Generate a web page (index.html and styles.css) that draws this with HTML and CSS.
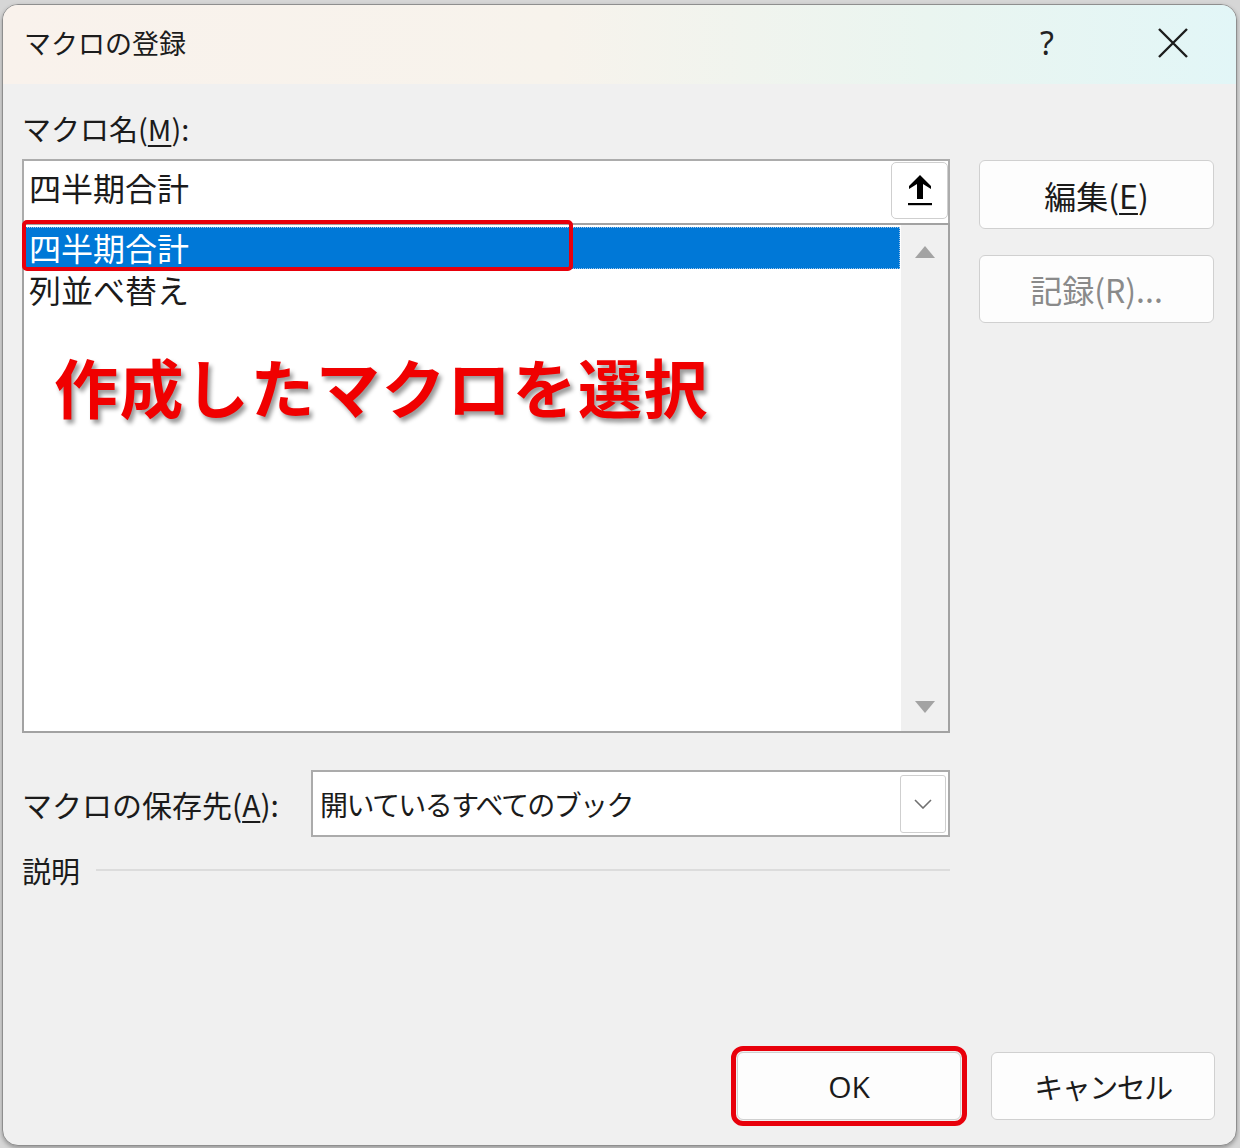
FILE: index.html
```html
<!DOCTYPE html>
<html lang="ja">
<head>
<meta charset="utf-8">
<title>マクロの登録</title>
<link rel="stylesheet" href="styles.css">
</head>
<body>
<div class="dialog">
  <div class="titlebar">
    <span class="title">マクロの登録</span>
    <span class="help">?</span>
    <span class="close">
      <svg width="30" height="30" viewBox="0 0 30 30"><path d="M1 1 L29 29 M29 1 L1 29" stroke="#1c1c1c" stroke-width="2.4" fill="none"/></svg>
    </span>
  </div>
  <div class="content">
    <div class="main">
      <div class="left">
        <div class="lbl">マクロ名(<u>M</u>):</div>
        <div class="namebox">
          <span class="nametext">四半期合計</span>
          <span class="upbtn">
            <svg width="24" height="32" viewBox="0 0 24 32"><path d="M12 0 L23 11 L23 14 L15 9 L15 24 L9 24 L9 9 L1 14 L1 11 Z" fill="#000"/><rect x="0" y="28" width="24" height="2.2" fill="#000"/></svg>
          </span>
        </div>
        <div class="list">
          <div class="rows">
            <div class="row sel">四半期合計</div>
            <div class="row">列並べ替え</div>
          </div>
          <div class="scroll">
            <span class="tri up"></span>
            <span class="tri down"></span>
          </div>
          <div class="mark-row"></div>
          <div class="annot">作成したマクロを選択</div>
        </div>
      </div>
      <div class="right">
        <div class="btn edit">編集(<u>E</u>)</div>
        <div class="btn dis">記録(R)...</div>
      </div>
    </div>
    <div class="saverow">
      <span class="lbl save">マクロの保存先(<u>A</u>):</span>
      <div class="select">
        <span class="seltext">開いているすべてのブック</span>
        <span class="chev">
          <svg width="18" height="10" viewBox="0 0 18 10"><path d="M1 1 L9 9 L17 1" stroke="#707070" stroke-width="1.6" fill="none"/></svg>
        </span>
      </div>
    </div>
    <div class="descrow">
      <span class="lbl">説明</span>
      <span class="rule"></span>
    </div>
    <div class="footer">
      <div class="btn fbtn ok">OK</div>
      <div class="btn fbtn cancel">キャンセル</div>
    </div>
  </div>
</div>
</body>
</html>
```

FILE: styles.css
```css
* { box-sizing: border-box; }
html, body { margin: 0; padding: 0; }
body {
  width: 1240px;
  height: 1148px;
  background: #d6d6d6;
  font-family: "Noto Sans CJK JP", "Noto Sans", sans-serif;
  color: #1b1b1b;
  overflow: hidden;
}
.dialog {
  width: 1235px;
  height: 1142px;
  margin: 4px 0 0 2px;
  border: 1px solid #8e8e8e;
  border-radius: 16px;
  background: #f0f0f0;
  overflow: hidden;
  display: flex;
  flex-direction: column;
  box-shadow: 0 2px 4px rgba(0,0,0,0.3);
}
.titlebar {
  height: 79px;
  flex: none;
  display: flex;
  align-items: center;
  padding: 0 33px 4px 21px;
  background: linear-gradient(90deg, #f9f2ec 0%, #f7f3ec 45%, #eaf5f0 75%, #e2f6f7 100%);
}
.title {
  font-size: 27px;
  color: #1c1c1c;
}
.help {
  margin-left: auto;
  width: 60px;
  text-align: center;
  font-family: "Noto Sans", sans-serif;
  font-weight: 400;
  font-size: 32px;
  color: #222;
}
.close {
  margin-left: 66px;
  width: 60px;
  display: flex;
  justify-content: center;
  align-items: center;
}
.content {
  flex: 1;
  display: flex;
  flex-direction: column;
  padding: 24px 21px 25px 19px;
}
.main {
  display: flex;
  gap: 29px;
}
.left {
  width: 928px;
  display: flex;
  flex-direction: column;
}
.lbl {
  font-size: 29px;
  line-height: 40px;
  white-space: nowrap;
}
.lbl.save { font-size: 30px; }
.lbl u { text-underline-offset: 4px; text-decoration-thickness: 2px; }
.left > .lbl { margin-bottom: 11px; }
.namebox {
  height: 64px;
  background: #fff;
  border: 2px solid #acacac;
  border-bottom: none;
  display: flex;
  align-items: flex-start;
  padding-left: 5px;
}
.nametext {
  font-size: 32px;
  line-height: 52px;
  flex: 1;
}
.upbtn {
  width: 57px;
  height: 57px;
  margin-top: 1px;
  background: #fff;
  border: 1px solid #cfcfcf;
  border-radius: 5px;
  display: flex;
  align-items: center;
  justify-content: center;
}
.list {
  position: relative;
  height: 510px;
  background: #fff;
  border: 2px solid #a2a2a2;
  display: flex;
}
.rows {
  flex: 1;
  padding: 2px 1px 0 0;
}
.row {
  height: 42px;
  font-size: 32px;
  line-height: 40px;
  padding-left: 5px;
  white-space: nowrap;
}
.row.sel {
  background: #0078d7;
  color: #fff;
  outline: 1px dotted #9cc4ea;
  outline-offset: -1px;
}
.scroll {
  width: 47px;
  background: #f0f0f0;
  display: flex;
  flex-direction: column;
  justify-content: space-between;
  align-items: center;
  padding: 21px 0 18px;
}
.tri {
  width: 0;
  height: 0;
  border-left: 10px solid transparent;
  border-right: 10px solid transparent;
}
.tri.up { border-bottom: 12px solid #a3a3a3; }
.tri.down { border-top: 12px solid #a3a3a3; }
.mark-row {
  position: absolute;
  left: -2px;
  top: -5px;
  width: 551px;
  height: 51px;
  border: 4px solid #e8000b;
  border-radius: 5px;
}
.annot {
  position: absolute;
  left: 30px;
  top: 128px;
  font-size: 64px;
  line-height: 1;
  font-weight: 700;
  letter-spacing: 1.5px;
  color: #f00000;
  white-space: nowrap;
  text-shadow: 3px 4px 4px rgba(0,0,0,0.4);
}
.right {
  width: 235px;
  padding-top: 52px;
  display: flex;
  flex-direction: column;
  gap: 26px;
}
.btn {
  height: 69px;
  background: #fdfdfd;
  border: 1px solid #d0d0d0;
  border-radius: 6px;
  display: flex;
  align-items: center;
  justify-content: center;
  font-size: 32px;
  color: #1b1b1b;
  white-space: nowrap;
}
.btn u { text-underline-offset: 4px; text-decoration-thickness: 2px; }
.btn.dis { height: 68px; color: #8a8a8a; }
.saverow {
  margin-top: 37px;
  display: flex;
  align-items: center;
  justify-content: space-between;
  width: 928px;
}
.select {
  width: 639px;
  height: 67px;
  background: #fff;
  border: 2px solid #ababab;
  display: flex;
  align-items: center;
  padding: 0 2px 0 7px;
}
.seltext {
  flex: 1;
  font-size: 28px;
  letter-spacing: -1.6px;
}
.chev {
  width: 46px;
  height: 58px;
  border: 1px solid #cfcfcf;
  border-radius: 3px;
  display: flex;
  align-items: center;
  justify-content: center;
  background: #fff;
}
.descrow {
  margin-top: 13px;
  width: 928px;
  display: flex;
  align-items: center;
  gap: 16px;
}
.rule {
  flex: 1;
  height: 2px;
  background: #dcdcdc;
}
.footer {
  margin-top: auto;
  display: flex;
  justify-content: flex-end;
  gap: 30px;
}
.fbtn {
  width: 224px;
  height: 68px;
}
.fbtn.cancel {
  font-size: 29px;
  letter-spacing: -1.5px;
}
.fbtn.ok {
  font-family: "Open Sans", "Noto Sans", sans-serif;
  font-size: 30px;
  outline: 5px solid #e8000b;
  outline-offset: 1px;
}
```
